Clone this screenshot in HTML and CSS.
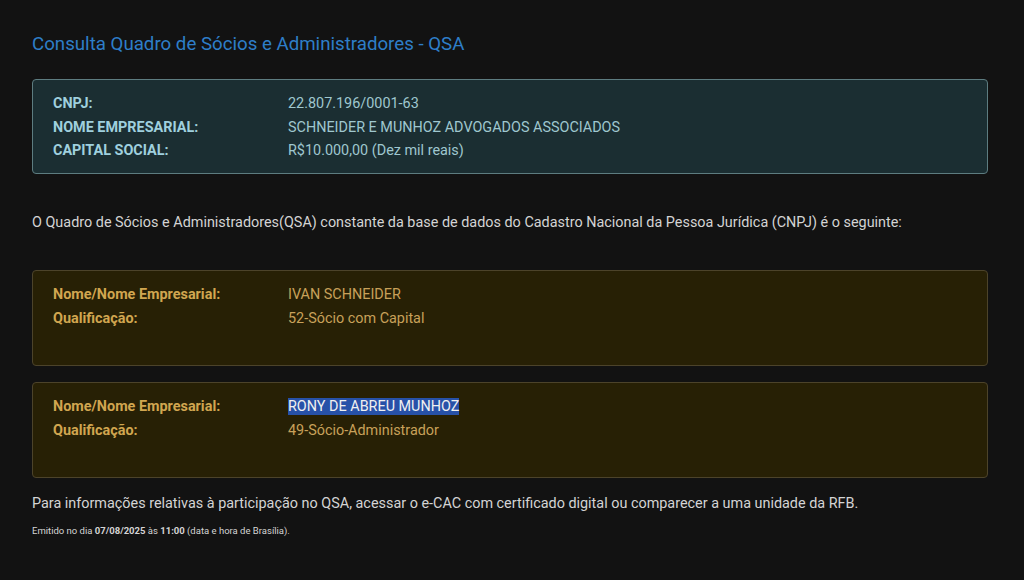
FILE: index.html
```html
<!DOCTYPE html>
<html lang="pt-BR">
<head>
    <meta charset="UTF-8">
    <meta name="viewport" content="width=device-width, initial-scale=1.0">
    <title>Consulta QSA</title>
    <link rel="stylesheet" href="styles.css">
</head>
<body>
    <div class="page">
        <h1 class="title">Consulta Quadro de Sócios e Administradores - QSA</h1>

        <div class="box company">
            <div class="row"><span class="label">CNPJ:</span><span class="value">22.807.196/0001-63</span></div>
            <div class="row"><span class="label">NOME EMPRESARIAL:</span><span class="value">SCHNEIDER E MUNHOZ ADVOGADOS ASSOCIADOS</span></div>
            <div class="row"><span class="label">CAPITAL SOCIAL:</span><span class="value">R$10.000,00 (Dez mil reais)</span></div>
        </div>

        <p class="intro">O Quadro de Sócios e Administradores(QSA) constante da base de dados do Cadastro Nacional da Pessoa Jurídica (CNPJ) é o seguinte:</p>

        <div class="box partner">
            <div class="row"><span class="label">Nome/Nome Empresarial:</span><span class="value">IVAN SCHNEIDER</span></div>
            <div class="row"><span class="label">Qualificação:</span><span class="value">52-Sócio com Capital</span></div>
        </div>

        <div class="box partner">
            <div class="row"><span class="label">Nome/Nome Empresarial:</span><span class="value"><span class="selected">RONY DE ABREU MUNHOZ</span></span></div>
            <div class="row"><span class="label">Qualificação:</span><span class="value">49-Sócio-Administrador</span></div>
        </div>

        <p class="note">Para informações relativas à participação no QSA, acessar o e-CAC com certificado digital ou comparecer a uma unidade da RFB.</p>
        <p class="emitted">Emitido no dia <b>07/08/2025</b> às <b>11:00</b> (data e hora de Brasília).</p>
    </div>
</body>
</html>
```

FILE: styles.css
```css
body {
    margin: 0;
    background-color: #121212;
    font-family: Roboto, "Liberation Sans", Arial, sans-serif;
    font-size: 14.4px;
    color: #d4d4d4;
}
.page {
    padding: 33px 36px 20px 32px;
}
.title {
    margin: 0 0 24px;
    font-size: 18.7px;
    font-weight: 400;
    line-height: 22px;
    color: #2e7ec8;
}
.box {
    border-radius: 4px;
    padding: 12px 20px;
}
.company {
    background-color: #1b2e32;
    border: 1px solid #5d7c80;
    color: #9fc7cf;
    height: 69px;
}
.company .label {
    color: #9fd0de;
}
.partner {
    background-color: #272005;
    border: 1px solid #4c432a;
    color: #c8a15a;
    height: 70px;
}
.partner + .partner {
    margin-top: 16px;
}
.partner .label {
    color: #d1a650;
}
.row {
    display: flex;
    line-height: 23.5px;
}
.label {
    width: 235px;
    font-weight: 700;
}
.selected {
    background-color: #2751a8;
    color: #f0f0f0;
}
.intro {
    margin: 38px 0 36px;
    line-height: 22px;
}
.note {
    margin: 15px 0 0;
    line-height: 22px;
}
.emitted {
    margin: 10px 0 0;
    font-size: 9.5px;
    line-height: 12px;
}
```
